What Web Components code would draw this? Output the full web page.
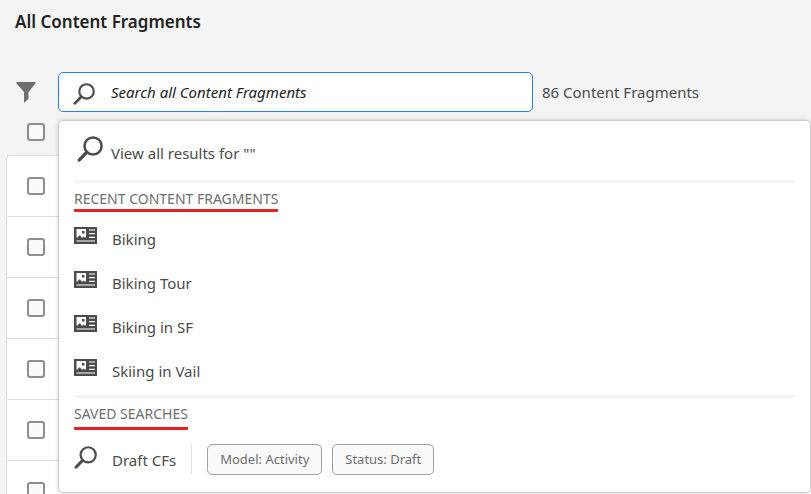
<!DOCTYPE html>
<html lang="en">
<head>
<meta charset="utf-8">
<title>All Content Fragments</title>
<style>
html, body { margin: 0; height: 100%; overflow: hidden; }
body { background: #f4f4f4; color: #4b4b4b; font: 15px/20px "Noto Sans", "Open Sans", sans-serif; }
</style>
</head>
<body>
<fragment-page>
  <search-bar slot="search" count="86 Content Fragments"></search-bar>
  <result-menu slot="menu">
    <menu-option kind="search">View all results for ""</menu-option>
    <menu-group heading="RECENT CONTENT FRAGMENTS">
      <menu-option kind="fragment">Biking</menu-option>
      <menu-option kind="fragment">Biking Tour</menu-option>
      <menu-option kind="fragment">Biking in SF</menu-option>
      <menu-option kind="fragment">Skiing in Vail</menu-option>
    </menu-group>
    <menu-group heading="SAVED SEARCHES" wide>
      <menu-option kind="saved">Draft CFs
        <filter-chip slot="chips">Model: Activity</filter-chip>
        <filter-chip slot="chips">Status: Draft</filter-chip>
      </menu-option>
    </menu-group>
  </result-menu>
</fragment-page>

<script>
const define = (name, html, setup) => {
  const template = document.createElement('template');
  template.innerHTML = html;
  customElements.define(name, class extends HTMLElement {
    constructor() {
      super();
      this.attachShadow({ mode: 'open' }).append(template.content.cloneNode(true));
    }
    connectedCallback() { if (setup) setup(this, this.shadowRoot); }
  });
};

const icons = {
  search: '<svg viewBox="0 0 24 24" fill="none" stroke="currentColor"><circle cx="14.8" cy="9.2" r="7.9" stroke-width="2.3"/><path d="M9 15 2 22.2" stroke-width="3" stroke-linecap="round"/></svg>',
  fragment: '<svg viewBox="0 0 23 17"><path fill="currentColor" d="M0 0h23v17H0z"/><path fill="#fff" d="M2.500 2h9.500v8l-1 .8-1.500-1.300L8 11 6 8.200 4.500 9l-.7 1.600H2.500z"/><path fill="currentColor" d="M8 4h2.500v2.500H8z"/><path fill="#a8a8a8" d="M15 2h6v2h-6zM2.500 13H21v2H2.500z"/><path fill="#fff" d="M15 6h6v1.300h-6zM15 9.700h6V11h-6z"/></svg>',
  filter: '<svg viewBox="0 0 20 21"><path fill="currentColor" d="M.5 0h19v1.6L12.5 10v7L8 20.800V10L.5 1.600z"/></svg>'
};

define('ui-icon', `<style>
  :host { display: block; flex: none; }
  svg { display: block; width: 100%; height: 100%; }
</style><span></span>`, (el, root) => {
  root.querySelector('span').innerHTML = icons[el.getAttribute('name')];
});

define('check-box', `<style>
  :host { display: block; }
  label { display: block; width: 18px; }
  input { appearance: none; display: block; box-sizing: border-box; width: 18px; height: 18px; margin: 0;
    border: 2px solid #8e8e8e; border-radius: 3px; background: #fafafa; }
</style><label><input type="checkbox"></label>`, (el, root) => {
  root.querySelector('input').setAttribute('aria-label', el.getAttribute('label'));
});

define('search-bar', `<style>
  :host { display: flex; align-items: center; padding-left: 16px; }
  button { flex: none; border: 0; padding: 0; background: none; color: #6e6e6e; }
  .filter { width: 20px; height: 21px; }
  .field { flex: 0 1 475px; min-width: 0; box-sizing: border-box; height: 40px; margin: 0 9px 0 22px; padding-left: 14px;
    display: flex; align-items: center; gap: 16px; background: #fff; border: 1px solid #2680eb; border-radius: 5px; }
  .glass { width: 22px; height: 22px; margin-top: 4px; color: #4b4b4b; }
  input { flex: 1; min-width: 0; border: 0; padding: 0; outline: 0; background: none; font: inherit; font-style: italic; color: #222; }
  input::placeholder { color: #222; opacity: 1; }
  output { white-space: nowrap; }
</style>
<button type="button" aria-label="Filter"><ui-icon class="filter" name="filter"></ui-icon></button>
<label class="field"><ui-icon class="glass" name="search"></ui-icon><input type="text" aria-label="Search all Content Fragments" placeholder="Search all Content Fragments"></label>
<output></output>`, (el, root) => {
  root.querySelector('output').textContent = el.getAttribute('count');
});

define('table-row', `<style>
  :host { display: flex; align-items: center; box-sizing: border-box; height: 61px; padding-left: 20px;
    border-top: 1px solid #dedede; }
</style><check-box label="Select fragment"></check-box>`);

define('result-menu', `<style>
  :host { display: block; box-sizing: border-box; background: #fff; border: 1px solid #cacaca; border-radius: 5px;
    padding: 0 15px 3px; box-shadow: 0 0 4px rgba(0,0,0,.16); }
</style><slot></slot>`);

define('menu-group', `<style>
  :host { display: block; border-top: 3px solid #f4f4f4; padding-bottom: 2px; }
  h2 { margin: 0; height: 34px; font-size: 14px; line-height: 32px; font-weight: 400; color: #6e6e6e; }
  span { display: inline-block; height: 26px; border-bottom: 3px solid #e42020; border-radius: 1px; }
  :host([wide]) span { height: 29px; }
</style><h2><span></span></h2><slot></slot>`, (el, root) => {
  root.querySelector('span').textContent = el.getAttribute('heading');
});

define('menu-option', `<style>
  :host { display: flex; align-items: center; height: 44px; }
  button { display: flex; align-items: center; border: 0; padding: 0; background: none; font: inherit; color: inherit; gap: 15px; }
  ui-icon { width: 23px; height: 17px; margin-bottom: 7px; }
  :host([kind="search"]) { height: 59px; }
  :host([kind="search"]) button { gap: 8px; margin-top: 4px; }
  :host([kind="search"]) ui-icon { width: 26px; height: 26px; margin-left: 3px; }
  :host([kind="saved"]) { height: 55px; }
  :host([kind="saved"]) ui-icon { width: 23px; height: 23px; margin-bottom: 5px; }
  .chips { display: none; }
  :host([kind="saved"]) .chips { display: flex; gap: 10px; margin-left: 15px; padding-left: 15px; border-left: 1px solid #e4e4e4; }
</style>
<button type="button"><ui-icon></ui-icon><span><slot></slot></span></button><div class="chips"><slot name="chips"></slot></div>`, (el, root) => {
  const icon = root.querySelector('ui-icon');
  const glyph = el.getAttribute('kind') === 'fragment' ? 'fragment' : 'search';
  icon.shadowRoot.querySelector('span').innerHTML = icons[glyph];
  icon.setAttribute('name', glyph);
});

define('filter-chip', `<style>
  :host { display: block; box-sizing: border-box; height: 31px; padding: 0 12px; border: 1px solid #a0a0a0; border-radius: 5px;
    background: #fafafa; color: #6e6e6e; font-size: 13px; line-height: 29px; white-space: nowrap; }
</style><slot></slot>`);

define('fragment-page', `<style>
  :host { display: block; position: relative; height: 100%; overflow: hidden; }
  h1 { margin: 0; padding: 10px 15px 38px; font-size: 17px; line-height: 24px; font-weight: 600; color: #222; }
  .select-all { padding: 11px 0 14px 27px; }
  .table { margin-left: 6px; background: #fff; border-left: 1px solid #dedede; border-radius: 5px 0 0 0; }
  .menu { position: absolute; top: 120px; left: 58px; right: 0; }
</style>
<h1>All Content Fragments</h1>
<slot name="search"></slot>
<div class="select-all"><check-box label="Select all"></check-box></div>
<div class="table"><table-row></table-row><table-row></table-row><table-row></table-row><table-row></table-row><table-row></table-row><table-row></table-row></div>
<div class="menu"><slot name="menu"></slot></div>`);
</script>
</body>
</html>
